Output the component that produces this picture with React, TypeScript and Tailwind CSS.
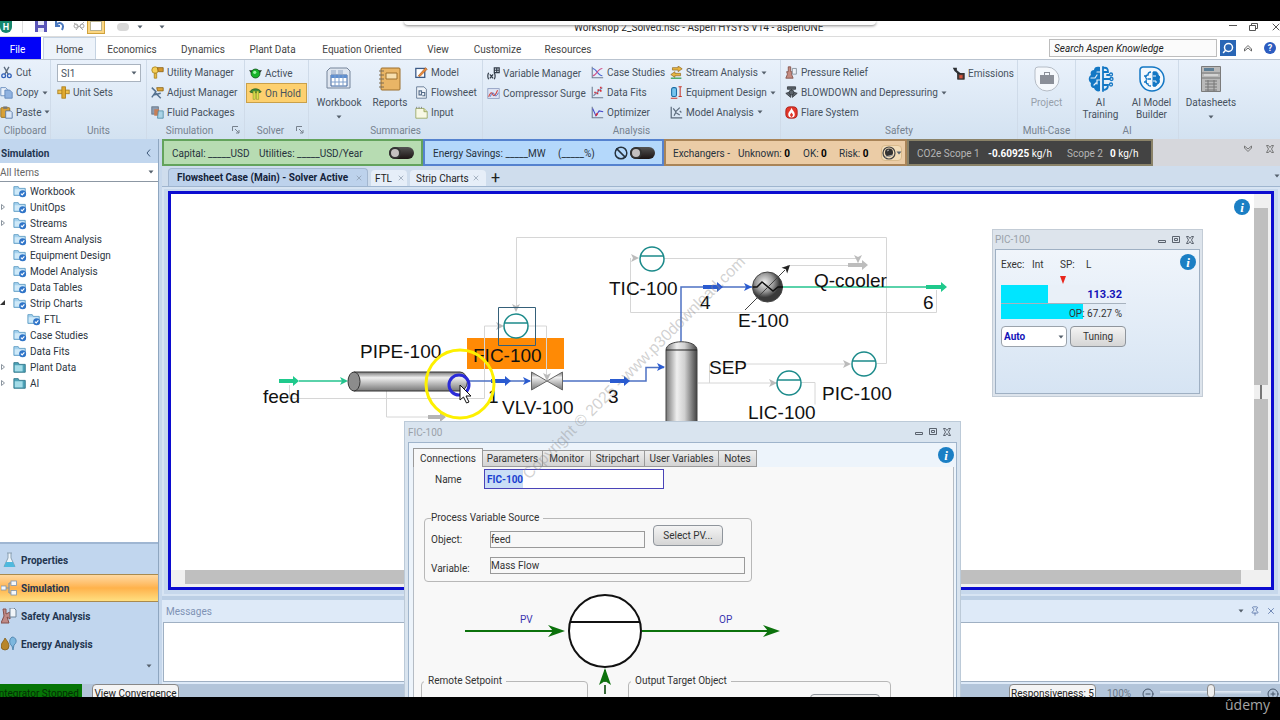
import type { ReactNode } from "react";
import { Search, Pin, X, Ban, CircleMinus, CirclePlus } from "lucide-react";

/* ---------- icons ---------- */

const ICONS: Record<string, ReactNode> = {
  cut: (
    <g fill="none" strokeWidth="1.6">
      <path d="M5 1l5 9M11 1L6 10" stroke="#5c6b7d" />
      <circle cx="4.5" cy="12" r="2.3" stroke="#2f5fb8" />
      <circle cx="11.5" cy="12" r="2.3" stroke="#2f5fb8" />
    </g>
  ),
  copy: (
    <g stroke="#5b82b8">
      <path d="M1 2h6l2 2v8H1z" fill="#e9f1fb" />
      <path d="M6 5h6l3 3v7H6z" fill="#8fb2e0" />
    </g>
  ),
  paste: (
    <g>
      <rect x="1" y="2" width="11" height="12" rx="1" fill="#d9a136" stroke="#8c6a1f" />
      <rect x="4" y="0.5" width="5" height="3" fill="#777" />
      <path d="M7 6h6l2 2v7H7z" fill="#dbe7f7" stroke="#4c6f9f" />
    </g>
  ),
  unitsets: (
    <g stroke="#a87b17">
      <rect x="1" y="5" width="14" height="4.5" fill="#efc14d" />
      <rect x="6" y="1" width="4.5" height="14" fill="#e0a92f" />
    </g>
  ),
  utility: (
    <g>
      <circle cx="5" cy="5" r="4" fill="#f5cf5a" stroke="#a8821c" />
      <path d="M8 2h7v5H9z" fill="#d5972b" stroke="#8b6218" />
      <path d="M4 9h3v6H4z" fill="#e9b944" stroke="#a8821c" />
    </g>
  ),
  adjust: (
    <g>
      <path d="M7 2h8v4H8z" fill="#dca63a" stroke="#8b6218" />
      <path d="M1 2l5 5-5 7M5 8l7 7M3 11l9-2" stroke="#54708e" strokeWidth="1.8" fill="none" />
    </g>
  ),
  fluid: (
    <g>
      <rect x="1" y="1" width="8" height="9" fill="#8c9cb0" stroke="#5f6e80" />
      <rect x="4" y="4" width="6" height="8" fill="#c67e55" />
      <path d="M9 6h6v9H8z" fill="#a9d3e6" stroke="#4f8aa5" />
    </g>
  ),
  active: (
    <g>
      <path d="M0 4h16l-3 4H3z" fill="#2c3a2e" />
      <circle cx="8" cy="8" r="5.5" fill="#17b32a" stroke="#14521c" />
      <circle cx="7" cy="6.5" r="2" fill="#9df5a5" />
    </g>
  ),
  hold: (
    <g>
      <path d="M1 6c3-5 11-5 14 0l-3 1H4z" fill="#3f8e3c" stroke="#245b23" />
      <rect x="5" y="5" width="2.6" height="10" fill="#d8e04a" stroke="#7a8a20" strokeWidth=".6" />
      <rect x="9.5" y="5" width="2.6" height="10" fill="#d8e04a" stroke="#7a8a20" strokeWidth=".6" />
    </g>
  ),
  model: (
    <g>
      <rect x="1" y="3" width="11" height="11" fill="#fff" stroke="#3c5a86" strokeWidth="1.6" />
      <path d="M4 12L13 2l2 2-9 9z" fill="#e98a3a" stroke="#9a4b14" strokeWidth=".7" />
    </g>
  ),
  flowsheet: (
    <g stroke="#566d89" fill="none">
      <path d="M2 1h9l3 3v11H2z" fill="#eef3f9" />
      <path d="M5 6h3v5H5zM8 8h4v4H9" strokeWidth="1.4" />
    </g>
  ),
  input: (
    <g stroke="#94a25a">
      <path d="M1 3h10l4 4v8H1z" fill="#f7f8e4" />
      <path d="M11 3v4h4" fill="#d8dca6" />
      <path d="M2 1v2M5 1v2M8 1v2" stroke="#777" />
    </g>
  ),
  variable: (
    <g fill="none" stroke="#333d49" strokeWidth="1.5">
      <path d="M2 7q-2 4 0 8M9 7q2 4 0 8M3.500 9l4 5M7.500 9l-4 5" />
      <path d="M9 1h6v6H9zM12 1v6M9 4h6" />
    </g>
  ),
  surge: (
    <g fill="none">
      <rect x="1" y="2" width="14" height="12" fill="#dfe5f5" stroke="#8a99bd" />
      <path d="M2 12q3-8 5-3t6-5" stroke="#d2453d" strokeWidth="1.3" />
      <path d="M4 12q3-8 5-3t5-2" stroke="#4967c2" />
    </g>
  ),
  case: (
    <g fill="none" strokeWidth="1.3">
      <path d="M1.500 1v13.500H15" stroke="#6d7c90" />
      <path d="M2 3c5 0 6 9 12 9" stroke="#4b66d0" />
      <path d="M2 12c5 0 6-9 12-9" stroke="#d0568b" />
    </g>
  ),
  fits: (
    <g fill="none" strokeWidth="1.3">
      <path d="M1.500 1v13.500H15" stroke="#6d7c90" />
      <path d="M3 12L14 2" stroke="#7684a8" />
      <path d="M4 8h2M7 9h2M8 5h2M11 6h2M11 2h2" stroke="#d5303a" strokeWidth="2" />
    </g>
  ),
  optimizer: (
    <g fill="none" strokeWidth="1.3">
      <path d="M1.500 1v13.500H15" stroke="#6d7c90" />
      <path d="M2 3l4 9 4-6 5 1" stroke="#4747c8" />
      <path d="M6 12l2-3" stroke="#d5303a" strokeWidth="2" />
    </g>
  ),
  stream: (
    <g stroke="#8b6218" strokeWidth=".8">
      <path d="M3 2h7V0l5 3.500L10 7V5H3z" fill="#e7b541" />
      <path d="M13 9H6V7L1 10.500 6 14v-2h7z" fill="#e7b541" />
      <path d="M1 15h13" stroke="#2e9a4a" strokeWidth="1.500" />
    </g>
  ),
  equipment: (
    <g>
      <rect x="2" y="2" width="6" height="11" rx="2" fill="#77c4ee" stroke="#1b6ea5" strokeWidth="1.3" />
      <path d="M12.500 1v12M10.500 1h4M10.500 13h4M1 15h8" stroke="#c6382c" strokeWidth="1.300" />
    </g>
  ),
  analysis: (
    <g fill="none" stroke="#5b6a7b" strokeWidth="1.500">
      <path d="M1.500 1v13.500H15" />
      <path d="M4 3l3 4 5-5M5 12l2-4 5 3M12 6l2 2" />
    </g>
  ),
  relief: (
    <g>
      <path d="M4 1h3v6h2l-1 3 2 5H1l2-5-1-3h2z" fill="#c58b80" stroke="#7c4b43" />
      <path d="M9 3h5v7H9z" fill="#eef1f5" stroke="#7a8794" />
    </g>
  ),
  blowdown: (
    <g fill="#5d646c" stroke="#33383d">
      <path d="M1 9l6-2v7zM15 9l-6-2v7zM3 1h10v3H3zM8 4v4" />
      <circle cx="8" cy="8" r="3" />
    </g>
  ),
  flare: (
    <g>
      <rect x="1" y="1" width="14" height="14" rx="5" fill="#e2372b" stroke="#a31a12" />
      <path d="M8 2c1 3 4 5 4 8a4 4 0 01-8 0c0-3 3-4 4-8z" fill="#fff" />
      <path d="M8 8l2 3-2 3-2-3z" fill="#e2372b" />
    </g>
  ),
  emissions: (
    <g>
      <path d="M1 1h5v3l5 4-2 2-6-5z" fill="#2e3136" />
      <rect x="7" y="8" width="8" height="7" fill="#4b3a38" stroke="#222" />
      <path d="M9 10h4v4H9z" fill="#d4553f" />
    </g>
  ),
  folder: (
    <g>
      <path d="M1 3h5l1 2h7v8H1z" fill="#a6d3ef" stroke="#5e9cc4" />
      <path d="M2 6h11v6H2z" fill="#cfe9f8" />
      <circle cx="11" cy="11" r="4" fill="#2f74c8" />
      <path d="M9 11l1.500 1.500L13 9.500" stroke="#fff" strokeWidth="1.300" fill="none" />
    </g>
  ),
  plainfolder: (
    <g>
      <path d="M1 3h5l1 2h7v9H1z" fill="#4ea3b8" stroke="#2b7388" />
      <path d="M2 6h9v7H2z" fill="#a4dce8" />
    </g>
  ),
  flask: (
    <g>
      <path d="M6 1h5M7 1v5L3 14.500h11L10 6V1" fill="#eef5fa" stroke="#8aa0b2" />
      <path d="M5 10h7l2 5H3z" fill="#4fb9de" />
    </g>
  ),
  simulation: (
    <g fill="#f5f8fc" stroke="#7d93ad" strokeWidth=".8">
      <path d="M4 8h4M8 3v10M8 3h3M8 13h3" fill="none" strokeWidth="1.200" />
      <rect x="0" y="6" width="5" height="4" />
      <rect x="10" y="1" width="5.500" height="4.500" />
      <rect x="10" y="10.500" width="5.500" height="4.500" />
    </g>
  ),
  safety: (
    <g>
      <path d="M2 1h3v5l4-2v7l-3-2 2 6H0l3-7z" fill="#c08a86" stroke="#84504c" />
      <path d="M9 0h4l2 2v7H9z" fill="#f1f5f9" stroke="#6f8397" />
    </g>
  ),
  energy: (
    <g>
      <path d="M4 2c2 3 4 5 4 8a4 4 0 01-8 0c0-3 3-5 4-8z" fill="#b8862a" stroke="#7a5612" strokeWidth=".7" />
      <path d="M11 1c-4 3-2 8 0 9l1 4 1-5c4-3 2-8-2-8z" fill="#7db7de" stroke="#39719c" strokeWidth=".7" />
    </g>
  ),
};

function Icon({ name, className = "size-[13px]" }: { name: string; className?: string }) {
  return (
    <svg viewBox="0 0 16 16" className={`${className} shrink-0`} aria-hidden="true">
      {ICONS[name]}
    </svg>
  );
}

function Caret({ className = "" }: { className?: string }) {
  return (
    <svg viewBox="0 0 6 4" className={`h-1 w-1.5 shrink-0 ${className}`} aria-hidden="true">
      <path d="M0.500 0.500h5L3 3.500z" fill="#55606c" />
    </svg>
  );
}

function InfoButton() {
  return (
    <button
      aria-label="Info"
      className="flex size-4 items-center justify-center rounded-full bg-[#1b7fc4] font-['Liberation_Serif',serif] text-[13px] leading-none font-bold text-white italic"
    >
      i
    </button>
  );
}

function WindowControls() {
  return (
    <div className="flex items-center gap-1.5 pr-1.5">
      {["Minimize", "Restore", "Close"].map((label) => (
        <button key={label} aria-label={label} className="size-2">
          <svg viewBox="0 0 8 8" fill="none" stroke="#5b636e">
            {label === "Minimize" && <path d="M0.500 4.500h7v2h-7z" />}
            {label === "Restore" && <path d="M0.500 0.500h7v6h-7zM2.500 2.500h3v2h-3z" />}
            {label === "Close" && <path d="M0.500 0.500h2L4 2.500l1.500-2h2L5.500 4l2 3.500h-2L4 5.500l-1.500 2h-2L2.500 4z" />}
          </svg>
        </button>
      ))}
    </div>
  );
}

/* Left half solid with grooves, right half drawn as circuit traces. */
function CircuitBrain() {
  return (
    <svg viewBox="0 0 26 26" className="size-[26px]" fill="none" strokeLinecap="round">
      <path d="M12 1C9 0 6 1 6 4 3 4 2 7 3 9c-3 2-3 6 0 8-1 3 1 5 3 5 1 3 4 4 6 3z" fill="#1377c4" />
      <path d="M12 6H9M3 12h4l2-3M12 14H9v4M6 19l2-2" stroke="#e6eff9" strokeWidth="1.200" />
      <g stroke="#1377c4" strokeWidth="1.800">
        <path d="M15 1v24M15 2c4-1 5 1 5 4h-5M15 13h8M15 19h5c0 4-2 5-5 5M19 9h3" />
      </g>
      <g fill="#e6eff9" stroke="#1377c4" strokeWidth="1.300">
        <circle cx="23" cy="8.500" r="1.500" />
        <circle cx="23.500" cy="13" r="1.500" />
        <circle cx="23" cy="18.500" r="1.500" />
      </g>
    </svg>
  );
}

function ModelBrain() {
  return (
    <svg viewBox="0 0 26 26" className="size-[26px]" fill="none" stroke="#1377c4">
      <path d="M1 4a3 3 0 013-3h9a12 12 0 11-12 12z" fill="#f3f8fd" strokeWidth="1.500" />
      <path d="M12 6c-3 0-3 2-3 3-3 0-3 3-1 4-2 2-1 5 1 5 0 2 1 2 3 2M5 10h3M5 16h3M9 13h3" strokeWidth="1.300" />
      <path d="M14 6c4-1 5 1 5 3 2 1 2 3 1 4 1 3 0 5-2 5 0 2-2 3-4 2z" fill="#1377c4" />
      <path d="M14 10h3M14 15h3v2" stroke="#f3f8fd" />
    </svg>
  );
}

/* ---------- ribbon ---------- */

const MENU = [
  ["Economics", "w-[72px]"],
  ["Dynamics", "w-[70px]"],
  ["Plant Data", "w-[69px]"],
  ["Equation Oriented", "w-[110px]"],
  ["View", "w-[42px]"],
  ["Customize", "w-[77px]"],
  ["Resources", "w-[64px]"],
];

interface RibbonButtonProps {
  icon: string;
  label: string;
  caret?: boolean;
  on?: boolean;
  tight?: boolean;
}

function RibbonButton({ icon, label, caret, on, tight }: RibbonButtonProps) {
  return (
    <button
      className={`flex h-5 items-center gap-[3px] whitespace-nowrap ${
        on ? "w-[61px] border border-[#c9a04a] bg-[#fdd06f] pl-0.5" : tight ? "pl-0" : "pl-[3px]"
      }`}
    >
      <Icon name={icon} />
      {label}
      {caret && <Caret />}
    </button>
  );
}

function BigButton({ label, width, caret, dim, children }: { label: string; width: string; caret?: boolean; dim?: boolean; children: ReactNode }) {
  return (
    <button className={`flex flex-col items-center ${width} ${dim ? "text-[#97a0ab]" : ""}`}>
      <span className="mb-0.5 flex h-8 items-center justify-center">{children}</span>
      <span className="leading-[12px] whitespace-pre-line">{label}</span>
      {caret && <Caret className="mt-1.5" />}
    </button>
  );
}

function Group({ label, width, launcher, children }: { label: string; width: string; launcher?: boolean; children?: ReactNode }) {
  return (
    <div className={`flex shrink-0 flex-col border-r border-[#cfdbe9] pb-px ${width}`}>
      <div className="flex min-h-0 flex-1 pt-[3px]">{children}</div>
      <div className="flex h-4 shrink-0 items-center text-[#76828f]">
        <span className="flex-1 text-center">{label}</span>
        {launcher && (
          <svg viewBox="0 0 8 8" className="mr-1 size-2" fill="none" stroke="#77818d">
            <path d="M0.500 5V0.500H6M3 3l4 4M7 4v3H4" />
          </svg>
        )}
      </div>
    </div>
  );
}

function TitleBar() {
  return (
    <div className="relative flex h-4 shrink-0 items-start overflow-hidden border-b border-[#dcdcdc] bg-white">
      <div className="flex w-[400px] items-start">
        <span className="flex size-3 items-center justify-center rounded-b-full bg-[#16876c] text-[9px] leading-none font-bold text-white">H</span>
        <span className="ml-2.5 h-3 border-l border-[#ddd]" />
        <button aria-label="Save" className="ml-3">
          <svg viewBox="0 0 12 11" className="h-[11px] w-3">
            <path d="M0 0h12v11H0z" fill="#5a55b8" />
            <path d="M3 0h6v4H3zM3 7h6v4H3z" fill="#e9e9f7" />
          </svg>
        </button>
        <button aria-label="Undo" className="ml-2">
          <svg viewBox="0 0 10 10" className="size-2.5" fill="none" stroke="#4a78bf" strokeWidth="2">
            <path d="M1 4c4-4 9-1 6 5M1 0v5h4" />
          </svg>
        </button>
        <button aria-label="Explore" className="ml-2">
          <svg viewBox="0 0 12 10" className="h-2.5 w-3" fill="none" stroke="#a9a9a9">
            <path d="M1 2l5 4 5-5M3 9l3-4 4 4" />
            <circle cx="3" cy="5" r="2" />
            <circle cx="9" cy="5" r="2" />
          </svg>
        </button>
        <button aria-label="New" className="ml-0.5 flex h-[13px] w-[18px] items-end justify-center border border-t-0 border-[#d0a23c] bg-[#fbd682] pb-0.5">
          <span className="h-2.5 w-3 border border-[#b9b28e] bg-white" />
        </button>
        <button aria-label="Open" className="mt-0.5 ml-3 h-2 w-3 rounded-sm bg-[#d8d8d8]" />
        <Caret className="mt-1 ml-2" />
        <Caret className="mt-1 ml-4" />
      </div>
      <h1 className="ml-[174px] flex-1 leading-[13px] whitespace-nowrap text-[#222]">
        Workshop 2_Solved.hsc - Aspen HYSYS V14 - aspenONE
      </h1>
      <div className="flex items-start gap-3 text-[#555]">
        <button aria-label="Minimize" className="mt-1 h-px w-2 bg-[#555]" />
        <button aria-label="Restore" className="mt-0.5">
          <svg viewBox="0 0 9 8" className="h-2 w-[9px]" fill="none" stroke="#555">
            <path d="M0.500 2.500h6v5h-6zM2.500 2V.5h6v5H7" />
          </svg>
        </button>
        <button aria-label="Close" className="-mr-0.5">
          <X className="size-3" />
        </button>
      </div>
      <div className="absolute top-0 left-1/2 h-[4px] w-[472px] -translate-x-1/2 rounded-b-md bg-[#fdfdfd] shadow-[0_1px_3px_#888]" />
    </div>
  );
}

function MenuBar() {
  return (
    <nav className="flex h-[23px] shrink-0 items-stretch border-b border-[#b9c3cf] bg-white text-[#444]">
      <button className="w-[41px] bg-[#0202f8] pt-0.5 pr-1.5 text-white">File</button>
      <button className="ml-0.5 w-[53px] border-x border-t border-[#c5d3e2] bg-[#edf3fa] pt-0.5">Home</button>
      {MENU.map(([label, width]) => (
        <button key={label} className={`pt-0.5 whitespace-nowrap ${width}`}>
          {label}
        </button>
      ))}
      <div className="flex flex-1 items-center justify-end">
        <input
          aria-label="Search Aspen Knowledge"
          placeholder="Search Aspen Knowledge"
          className="h-[18px] w-[168px] border border-[#bdbdbd] bg-[#fbfbfb] px-1 italic placeholder:text-[#222]"
        />
        <button aria-label="Search" className="ml-[3px] flex size-4 items-center justify-center bg-[#2a66b5] text-white">
          <Search className="size-3 -scale-x-100" strokeWidth={3} />
        </button>
        <button aria-label="Collapse ribbon" className="ml-2 text-[#666]">
          <svg viewBox="0 0 8 7" className="h-[7px] w-2" fill="none" stroke="currentColor">
            <path d="M0.500 4L4 0.500 7.500 4v2L4 3 0.500 6z" />
          </svg>
        </button>
        <button aria-label="Help" className="mr-1 ml-3 size-3 rounded-full bg-[#2c5cc0] text-[9px] leading-none font-bold text-white">
          ?
        </button>
      </div>
    </nav>
  );
}

function Ribbon() {
  return (
    <div className="flex h-[79px] shrink-0 overflow-hidden bg-linear-to-b from-[#e9f1fb] to-[#d3e2f1] text-[#47525e]">
      <Group label="Clipboard" width="w-[51px]">
        <div className="flex flex-col">
          <RibbonButton icon="cut" label="Cut" tight />
          <RibbonButton icon="copy" label="Copy" caret tight />
          <RibbonButton icon="paste" label="Paste" caret tight />
        </div>
      </Group>
      <Group label="Units" width="w-24">
        <div className="flex flex-col pl-1.5">
          <label className="relative mt-px flex h-[18px] items-center">
            <select aria-label="Unit set" className="h-full w-[84px] appearance-none border border-[#a9b3bf] bg-white pl-[3px]">
              <option>SI1</option>
            </select>
            <Caret className="absolute right-1" />
          </label>
          <RibbonButton icon="unitsets" label="Unit Sets" tight />
        </div>
      </Group>
      <Group label="Simulation" width="w-[98px]" launcher>
        <div className="flex flex-col pl-px">
          <RibbonButton icon="utility" label="Utility Manager" />
          <RibbonButton icon="adjust" label="Adjust Manager" />
          <RibbonButton icon="fluid" label="Fluid Packages" />
        </div>
      </Group>
      <Group label="Solver" width="w-[64px]" launcher>
        <div className="flex flex-col pl-px">
          <RibbonButton icon="active" label="Active" />
          <RibbonButton icon="hold" label="On Hold" on />
        </div>
      </Group>
      <Group label="Summaries" width="w-[174px]">
        <BigButton label="Workbook" width="w-[60px]" caret>
          <svg viewBox="0 0 26 24" className="h-6 w-[26px]">
            <path d="M1 4l3-3h17l3 3v17H1z" fill="#dfe6f0" stroke="#75849a" />
            <path d="M5 3h5v4H5zM12 3h5v4h-5z" fill="#b8c6da" />
            <path d="M5 8h16v11H5z" fill="#fff" stroke="#41669f" />
            <path d="M5 8h16v3H5z" fill="#5f8fd0" />
            <path d="M9 8v11M13 8v11M17 8v11M5 15h16" stroke="#7f9fcc" />
          </svg>
        </BigButton>
        <BigButton label="Reports" width="w-[42px]">
          <svg viewBox="0 0 22 24" className="h-6 w-[22px]">
            <rect x="2" y="1" width="19" height="22" rx="1" fill="#e9b566" stroke="#9c6f2c" />
            <path d="M7 6h11v6H7z" fill="#f7dfae" stroke="#9c6f2c" />
            <path d="M0 4h5M0 8h5M0 12h5M0 16h5M0 20h5" stroke="#7b6b53" />
          </svg>
        </BigButton>
        <div className="flex flex-col pl-1">
          <RibbonButton icon="model" label="Model" tight />
          <RibbonButton icon="flowsheet" label="Flowsheet" tight />
          <RibbonButton icon="input" label="Input" tight />
        </div>
      </Group>
      <Group label="Analysis" width="w-[298px]">
        <div className="flex w-[104px] flex-col pl-px">
          <RibbonButton icon="variable" label="Variable Manager" />
          <RibbonButton icon="surge" label="Compressor Surge" />
        </div>
        <div className="flex w-20 flex-col pl-px">
          <RibbonButton icon="case" label="Case Studies" />
          <RibbonButton icon="fits" label="Data Fits" />
          <RibbonButton icon="optimizer" label="Optimizer" />
        </div>
        <div className="flex flex-col">
          <RibbonButton icon="stream" label="Stream Analysis" caret />
          <RibbonButton icon="equipment" label="Equipment Design" caret />
          <RibbonButton icon="analysis" label="Model Analysis" caret />
        </div>
      </Group>
      <Group label="Safety" width="w-[237px]">
        <div className="flex w-[168px] flex-col pl-px">
          <RibbonButton icon="relief" label="Pressure Relief" />
          <RibbonButton icon="blowdown" label="BLOWDOWN and Depressuring" caret />
          <RibbonButton icon="flare" label="Flare System" />
        </div>
        <RibbonButton icon="emissions" label="Emissions" />
      </Group>
      <Group label="Multi-Case" width="w-[58px]">
        <BigButton label="Project" width="w-[60px]" dim>
          <svg viewBox="0 0 26 26" className="size-[26px]">
            <path d="M1 4a3 3 0 013-3h9a12 12 0 11-12 12z" fill="#f5f8fc" stroke="#b5bcc6" />
            <path d="M6 9h14v9H6zM10 9V6h6v3h-1V7h-4v2z" fill="#8b8f98" />
          </svg>
        </BigButton>
      </Group>
      <Group label="AI" width="w-[103px]">
        <BigButton label={"AI\nTraining"} width="w-[49px]">
          <CircuitBrain />
        </BigButton>
        <BigButton label={"AI Model\nBuilder"} width="w-[53px]">
          <ModelBrain />
        </BigButton>
      </Group>
      <div className="flex flex-1 pt-[3px]">
        <BigButton label="Datasheets" width="w-[64px]" caret>
          <svg viewBox="0 0 20 26" className="h-[26px] w-5">
            <path d="M0.500 0.500h19v25H.5z" fill="#b9b9b9" stroke="#7b7b7b" />
            <path d="M3 2h10v3H3z" fill="#5f7f96" />
            <path d="M1 7h18M1 12h18M4 15h12M4 18h12M4 21h12M4 24h12M7 14v11M13 14v11" stroke="#767676" />
            <path d="M3 9h14" stroke="#eee" />
          </svg>
        </BigButton>
      </div>
    </div>
  );
}

/* ---------- sidebar ---------- */

const TREE: { label: string; arrow?: "closed" | "open"; plain?: boolean; child?: boolean }[] = [
  { label: "Workbook" },
  { label: "UnitOps", arrow: "closed" },
  { label: "Streams", arrow: "closed" },
  { label: "Stream Analysis" },
  { label: "Equipment Design" },
  { label: "Model Analysis" },
  { label: "Data Tables" },
  { label: "Strip Charts", arrow: "open" },
  { label: "FTL", child: true },
  { label: "Case Studies" },
  { label: "Data Fits" },
  { label: "Plant Data", arrow: "closed", plain: true },
  { label: "AI", arrow: "closed", plain: true },
];

const SECTIONS = [
  { label: "Properties", icon: "flask" },
  { label: "Simulation", icon: "simulation", on: true },
  { label: "Safety Analysis", icon: "safety" },
  { label: "Energy Analysis", icon: "energy" },
];

function Sidebar() {
  return (
    <aside className="flex w-[159px] shrink-0 flex-col border-r border-[#8ea6c0] bg-[#c1d6ee]">
      <div className="flex h-6 items-center justify-between px-px pt-1 text-[10px] font-bold text-[#1f3550]">
        Simulation
        <button aria-label="Collapse" className="pr-1.5">
          <svg viewBox="0 0 5 8" className="h-2 w-[5px]" fill="none" stroke="#3c5878">
            <path d="M4 0.500L1 4l3 3.500" />
          </svg>
        </button>
      </div>
      <label className="relative flex h-[19px] items-center border-b border-[#8c97a3] bg-white">
        <select aria-label="Filter items" className="h-full w-full appearance-none text-[#666]">
          <option>All Items</option>
        </select>
        <Caret className="absolute right-1" />
      </label>
      <ul className="min-h-0 flex-1 overflow-hidden bg-white pt-px text-[#2b3440]">
        {TREE.map((t) => (
          <li key={t.label} className={`flex h-4 items-center gap-[3px] ${t.child ? "pl-3.5" : ""}`}>
            <svg viewBox="0 0 6 8" className="mr-1 h-2 w-1.5" fill="none" stroke="#8b959f">
              {t.arrow === "closed" && <path d="M1.500 1.500L4.500 4l-3 2.500z" />}
              {t.arrow === "open" && <path d="M5 1v5H0z" fill="#333" stroke="none" />}
            </svg>
            <Icon name={t.plain ? "plainfolder" : "folder"} className="size-3.5" />
            {t.label}
          </li>
        ))}
      </ul>
      <div className="h-[142px] shrink-0 border-t-2 border-[#9fb6d2] pt-0.5">
        {SECTIONS.map((s) => (
          <button
            key={s.label}
            className={`flex h-7 w-full items-center gap-1 pl-px font-bold text-[#1f3550] ${
              s.on ? "border-y border-[#a98a4e] bg-linear-to-b from-[#ffd9a0] via-[#ffb24a] to-[#ffdf80]" : ""
            }`}
          >
            <Icon name={s.icon} className="size-4" />
            {s.label}
          </button>
        ))}
        <div className="flex justify-end pt-1.5 pr-1.5">
          <Caret />
        </div>
      </div>
    </aside>
  );
}

/* ---------- KPI strip and tabs ---------- */

function Toggle({ label }: { label: string }) {
  return (
    <input
      type="checkbox"
      role="switch"
      aria-label={label}
      className="h-3 w-[25px] appearance-none rounded-full bg-linear-to-b from-[#555] to-[#1c1515] before:block before:size-3 before:rounded-full before:border-2 before:border-[#333] before:bg-[#c4c0c0]"
    />
  );
}

function KpiBar() {
  return (
    <div className="flex h-[27px] shrink-0 whitespace-nowrap bg-[#d6d7dc] text-[#26313c]">
      <div className="flex w-[261px] items-center border-2 border-[#63a35c] bg-[#b7dcb2] pt-px pl-2">
        <span className="w-[87px]">Capital: _____USD</span>
        <span className="flex-1">Utilities: _____USD/Year</span>
        <span className="flex pr-[7px]">
          <Toggle label="Economics active" />
        </span>
      </div>
      <div className="flex w-[241px] items-center border-2 border-[#5582cf] bg-[#b4d8fb] pt-px pl-2">
        <span className="w-[125px]">Energy Savings: _____MW</span>
        <span className="flex-1">(_____%)</span>
        <Ban className="mr-0.5 size-3.5" strokeWidth={2.5} />
        <span className="flex pr-[7px]">
          <Toggle label="Energy active" />
        </span>
      </div>
      <div className="flex w-[243px] items-center border-2 border-[#a98458] bg-[#ebcca6] pt-px pl-[7px]">
        <span className="w-[65px]">Exchangers -</span>
        <span className="w-[65px]">Unknown: <b className="text-black">0</b></span>
        <span className="w-[36px]">OK: <b className="text-black">0</b></span>
        <span className="flex-1">Risk: <b className="text-black">0</b></span>
        <button aria-label="Exchanger options" className="mr-[3px] flex h-4 w-[21px] items-center rounded-sm border border-[#d9ba8c] bg-[#f2dcb8]">
          <svg viewBox="0 0 14 14" className="size-3.5 shrink-0" fill="none">
            <circle cx="7" cy="7" r="6" stroke="#444" strokeWidth="1.200" />
            <circle cx="7" cy="6.500" r="4" fill="#333" />
            <path d="M3 11l8-2M5 5l2-1" stroke="#aaa" />
          </svg>
          <Caret />
        </button>
      </div>
      <div className="flex w-[246px] items-center border-2 border-[#8a8268] bg-[#434343] pt-px pl-2 text-[#b5b5b5]">
        <span className="w-[71px]">CO2e Scope 1</span>
        <span className="w-[79px] text-white"><b>-0.60925</b> kg/h</span>
        <span className="w-[43px]">Scope 2</span>
        <span className="text-white"><b>0</b> kg/h</span>
      </div>
      <div className="flex flex-1 items-start justify-end gap-3.5 pt-1.5 pr-1.5">
        <svg viewBox="0 0 8 7" className="h-[7px] w-2" fill="none" stroke="#777">
          <path d="M0.500 3L4 6.500 7.500 3V1L4 4 .5 1z" />
        </svg>
        <svg viewBox="0 0 8 8" className="size-2" fill="none" stroke="#777">
          <path d="M0.500 0.500h2L4 2.500l1.500-2h2L5.500 4l2 3.500h-2L4 5.500l-1.500 2h-2L2.500 4z" />
        </svg>
      </div>
    </div>
  );
}

function TabStrip() {
  return (
    <div className="flex h-[21px] shrink-0 items-end gap-[3px] border-b border-[#9fb5cf] bg-[#cfdded] pl-1.5 whitespace-nowrap text-[#222]">
      <button className="flex h-[18px] w-[200px] items-center justify-between rounded-t border border-b-0 border-[#a3b7d0] bg-[#bdd2ec] pr-1 pl-2 font-bold text-[#14233a]">
        Flowsheet Case (Main) - Solver Active
        <X className="size-2 text-[#8796a8]" />
      </button>
      <button className="flex h-4 w-[36px] items-center justify-between rounded-t bg-[#e6eef8] pr-0.5 pl-1">
        FTL
        <X className="size-2 text-[#8796a8]" />
      </button>
      <button className="flex h-4 w-[76px] items-center justify-between rounded-t bg-[#e6eef8] pr-1.5 pl-1.5">
        Strip Charts
        <X className="size-2 text-[#8796a8]" />
      </button>
      <button aria-label="New tab" className="h-4 pl-0.5 text-[16px] leading-4">+</button>
      <span className="flex h-full flex-1 items-center justify-end">
        <Caret />
      </span>
    </div>
  );
}

/* ---------- flowsheet ---------- */

const LABELS: [string, number, number][] = [
  ["feed", 263, 403],
  ["PIPE-100", 360, 358],
  ["FIC-100", 473, 362],
  ["1", 488, 403],
  ["VLV-100", 502, 414],
  ["3", 608, 403],
  ["TIC-100", 609, 295],
  ["4", 700, 309],
  ["E-100", 738, 327],
  ["Q-cooler", 814, 287],
  ["6", 923, 309],
  ["SEP", 709, 374],
  ["LIC-100", 748, 419],
  ["PIC-100", 822, 400],
];

function Controller({ x, y }: { x: number; y: number }) {
  return (
    <g fill="#fff" stroke="#1b8a8a" strokeWidth="1.500">
      <circle cx={x} cy={y} r="12" />
      <path d={`M${x - 11.500} ${y - 3}h23`} />
    </g>
  );
}

function StreamArrow({ x, y, color, w = 20 }: { x: number; y: number; color: string; w?: number }) {
  return <path d={`M${x} ${y - 2}h${w - 6}v-3l6 5-6 5v-3h-${w - 6}z`} fill={color} />;
}

function Tip({ x, y, color, r = 0 }: { x: number; y: number; color: string; r?: number }) {
  return <path d="M0 0l-8-4 2 4-2 4z" fill={color} transform={`translate(${x} ${y}) rotate(${r})`} />;
}

function Flowsheet() {
  return (
    <svg className="absolute inset-0 h-full w-full" role="img" aria-label="Process flowsheet">
      <defs>
        <linearGradient id="pipe" x2="0" y2="1">
          <stop offset="0" stopColor="#777" />
          <stop offset="0.3" stopColor="#f0f0f0" />
          <stop offset="1" stopColor="#777" />
        </linearGradient>
        <linearGradient id="vessel">
          <stop offset="0" stopColor="#777" />
          <stop offset="0.350" stopColor="#efefef" />
          <stop offset="0.600" stopColor="#d0d0d0" />
          <stop offset="1" stopColor="#444" />
        </linearGradient>
        <radialGradient id="ball" cx="0.400" cy="0.350">
          <stop offset="0" stopColor="#f0f0f0" />
          <stop offset="0.600" stopColor="#999" />
          <stop offset="1" stopColor="#3a3a3a" />
        </radialGradient>
      </defs>
      <g transform="translate(-171 -194)">
        <path d="M467 338h97v31h-97z" fill="#ff8a05" />
        <g fill="none" stroke="#d6d6d6">
          <path d="M516.500 308V237.500h370v126h-10M289.500 385v13.500h195v-72.500h18M528 326h18.500v50" />
          <path d="M386.500 391v26h45M630.500 258v54.500h306V290M664 258.500h194v4M698 383h84M709.500 383v-19h138M801 382.500h14v22M787 265.500h65" />
        </g>
        <g fill="none" stroke="#4d72c4" strokeWidth="1.500">
          <path d="M468 381h62M563 381h83v-13.500h18M681 342V287h71" />
        </g>
        <path d="M299 381h46M783 287h145" stroke="#24c48e" strokeWidth="1.500" />
        <StreamArrow x={279} y={381} color="#1fc98c" />
        <StreamArrow x={926} y={287} color="#1fc98c" w={21} />
        <StreamArrow x={491} y={381} color="#2a5bd0" />
        <StreamArrow x={610} y={381} color="#2a5bd0" />
        <StreamArrow x={703} y={287} color="#2a5bd0" />
        <StreamArrow x={848} y={265} color="#bdbdbd" />
        <StreamArrow x={428} y={417} color="#b5b5b5" w={18} />
        <Tip x={348} y={381} color="#24c48e" />
        <Tip x={531} y={381} color="#2a5bd0" />
        <Tip x={665} y={367} color="#2a5bd0" />
        <Tip x={752} y={287} color="#2a5bd0" />
        <Tip x={516} y={312} color="#bbb" r={90} />
        <Tip x={504} y={326} color="#bbb" />
        <Tip x={639} y={258} color="#bbb" />
        <Tip x={858} y={263} color="#bbb" r={90} />
        <Tip x={777} y={383} color="#bbb" />
        <Tip x={851} y={364} color="#bbb" />
        <path d="M354 372h106a7 9 0 010 19H354z" fill="url(#pipe)" stroke="#333" />
        <ellipse cx="354" cy="381.500" rx="6" ry="9.500" fill="#8c8c8c" stroke="#333" />
        <path d="M531.500 372l31 18v-18l-31 18z" fill="url(#pipe)" stroke="#666" />
        <Tip x={547} y={381} color="#bbb" r={90} />
        <path d="M498.500 307.500h37v38h-37z" fill="none" stroke="#356079" />
        <Controller x={516} y={326} />
        <Controller x={652} y={259} />
        <Controller x={864} y={364} />
        <Controller x={789} y={383} />
        <path d="M666 350v80h31v-80c0-11-31-11-31 0z" fill="url(#vessel)" stroke="#444" />
        <path d="M666 350h31" stroke="#222" />
        <circle cx="767.500" cy="287" r="15" fill="url(#ball)" stroke="#444" />
        <path d="M753 287h4l5-5 11 9 5-4h5" fill="none" stroke="#111" strokeWidth="1.500" />
        <path d="M745 310l40-40" stroke="#444" />
        <Tip x={790} y={265} color="#222" r={-45} />
        <g fontFamily="'Liberation Sans', sans-serif" fontSize="19" fill="#111">
          {LABELS.map(([text, x, y]) => (
            <text key={text} x={x} y={y}>
              {text}
            </text>
          ))}
        </g>
      </g>
    </svg>
  );
}

function PicWindow() {
  return (
    <section className="absolute top-[35px] left-[821px] flex h-[168px] w-[211px] flex-col border border-[#c3ccd6] bg-[#dde4ec] px-0.5 pb-0.5">
      <header className="flex h-[19px] items-center justify-between text-[#9aa1a9]">
        PIC-100
        <WindowControls />
      </header>
      <div className="flex flex-1 justify-between border border-[#9fb0c3] bg-linear-to-b from-[#f0f5fb] to-[#d6e4f3] pt-1 pr-[3px] pl-[5px] text-[#333]">
        <div className="w-[125px]">
          <div className="flex h-5 items-center">
            <span className="w-[31px]">Exec:</span>
            <span className="w-7">Int</span>
            <span className="w-[26px]">SP:</span>
            <span>L</span>
          </div>
          <svg viewBox="0 0 125 8" className="mt-0.5 h-2 w-full" aria-hidden="true">
            <path d="M59 0h6l-3 8z" fill="#e8261c" />
          </svg>
          <div className="mt-px h-[19px] border-b border-[#a7b2be] bg-linear-to-r from-[#00e5ff] from-[38%] to-[#e9f0f8] to-[38%] pr-1 text-right text-[11px] leading-[19px] font-bold text-[#1313b8]">
            113.32
          </div>
          <div className="h-[15px] bg-linear-to-r from-[#00e5ff] from-[66%] to-[#e3ecf6] to-[66%] pr-1 text-right leading-[19px]">
            OP: 67.27 %
          </div>
          <div className="mt-[7px] flex h-[21px] gap-[3px]">
            <label className="relative flex w-[66px] items-center">
              <select aria-label="Mode" className="h-full w-full appearance-none rounded-sm border border-[#9ba3ac] bg-white pl-0.5 font-bold text-[#1313b8]">
                <option>Auto</option>
              </select>
              <Caret className="absolute right-[3px]" />
            </label>
            <button className="flex-1 rounded-sm border border-[#8f959c] bg-linear-to-b from-[#f4f4f4] to-[#d5d5d5] text-[10px]">
              Tuning
            </button>
          </div>
        </div>
        <InfoButton />
      </div>
    </section>
  );
}

function Canvas() {
  return (
    <div className="flex min-h-0 flex-1 border-2 border-[#d7e4f3] px-1 pt-[2px] pb-1">
      <div className="relative flex min-h-0 flex-1 flex-col overflow-hidden border-[3px] border-[#0c0cd0] bg-white">
        <div className="flex min-h-0 flex-1">
          <div className="relative min-h-0 flex-1">
            <Flowsheet />
            <PicWindow />
            <div className="absolute top-[5px] right-1">
              <InfoButton />
            </div>
          </div>
          <div className="flex w-[17px] flex-col bg-[#f0f0f0] pt-3.5 pr-[3px]">
            <div className="h-[177px] bg-[#bfbfbf]" />
            <div className="flex h-3.5 justify-center">
              <span className="w-0.5 bg-[#777]" />
            </div>
            <div className="flex-1 bg-[#bfbfbf]" />
          </div>
        </div>
        <div className="flex h-[17px] shrink-0 bg-[#f0f0f0] pr-[30px] pb-[3px] pl-3.5">
          <div className="flex-1 bg-[#bfbfbf]" />
        </div>
      </div>
    </div>
  );
}

function Messages() {
  return (
    <section className="flex h-[88px] shrink-0 flex-col border-t-4 border-[#bccfe5] bg-[#deeaf8] pb-0.5">
      <header className="flex h-[22px] items-center justify-between px-1 text-[#7f93b5]">
        Messages
        <span className="flex items-center gap-1.5 text-[#5a75a8]">
          <Caret />
          <Pin className="size-2.5" />
          <X className="size-2.5" />
        </span>
      </header>
      <div className="mx-px flex-1 border border-[#9fb0c3] bg-white" />
    </section>
  );
}

function StatusBar() {
  return (
    <footer className="flex h-[13px] shrink-0 items-start overflow-hidden bg-[#b3c5da] text-[#222]">
      <span className="-ml-1 h-5 w-[86px] bg-[#067506] pt-0.5 leading-[16px] whitespace-nowrap text-[#042c04]">
        Integrator Stopped
      </span>
      <button className="ml-2.5 h-5 w-[87px] rounded-sm border border-[#888] bg-[#f4f4f4] leading-[16px] whitespace-nowrap">
        View Convergence
      </button>
      <div className="flex flex-1 items-start justify-end">
        <button className="h-5 w-[87px] rounded-sm border border-[#888] bg-[#f4f4f4] leading-[16px] whitespace-nowrap">
          Responsiveness: 5
        </button>
        <span className="w-[46px] pt-0.5 text-center leading-[16px] text-[#6a7787]">100%</span>
        <CircleMinus className="mt-1 size-3 text-[#46566a]" />
        <input
          type="range"
          aria-label="Zoom"
          className="mx-1.5 h-3.5 w-[101px] appearance-none bg-linear-to-b from-transparent from-[50%] via-[#e5edf6] via-[50%] to-transparent to-[75%] [&::-webkit-slider-thumb]:h-3.5 [&::-webkit-slider-thumb]:w-2 [&::-webkit-slider-thumb]:appearance-none [&::-webkit-slider-thumb]:rounded-sm [&::-webkit-slider-thumb]:border [&::-webkit-slider-thumb]:border-[#888] [&::-webkit-slider-thumb]:bg-[#eee]"
        />
        <CirclePlus className="mt-1 mr-px size-3 text-[#46566a]" />
      </div>
    </footer>
  );
}

/* ---------- FIC-100 window ---------- */

function FicTab({ label, width }: { label: string; width: string }) {
  return (
    <button className={`h-[17px] border border-l-0 border-[#9a9a9a] bg-linear-to-b from-[#ededed] to-[#d3d3d3] whitespace-nowrap ${width}`}>
      {label}
    </button>
  );
}

function FicWindow() {
  return (
    <section className="absolute top-[400px] left-[404px] flex h-[340px] w-[557px] flex-col border border-[#bccad8] bg-[#d9e4ef] px-[3px] text-[#333]">
      <header className="flex h-[20px] items-center justify-between text-[#9aa1a9]">
        FIC-100
        <WindowControls />
      </header>
      <div className="flex flex-1 flex-col border border-[#9fb4cb] bg-[#edf4fb] pt-1 pr-0.5 pl-1">
        <div className="flex items-end">
          <button className="h-[19px] w-[70px] border border-b-0 border-[#9a9a9a] bg-[#f8f8f8]">Connections</button>
          <FicTab label="Parameters" width="w-[60px]" />
          <FicTab label="Monitor" width="w-[48px]" />
          <FicTab label="Stripchart" width="w-[54px]" />
          <FicTab label="User Variables" width="w-[74px]" />
          <FicTab label="Notes" width="w-[38px]" />
          <div className="flex flex-1 justify-end pb-1">
            <InfoButton />
          </div>
        </div>
        <div className="flex-1 border-x border-[#b5bcc4] bg-[#f8f8f8] pt-0.5">
          <div className="flex h-5 items-center">
            <label htmlFor="fic-name" className="w-[70px] pl-[21px]">Name</label>
            <input
              id="fic-name"
              defaultValue="FIC-100"
              className="h-5 w-[180px] border border-[#4a44b8] bg-linear-to-r from-[#c9def6] from-[38px] to-white to-[38px] px-0.5 font-bold text-[#1a3fd0]"
            />
          </div>
          <fieldset className="mt-[22px] ml-2.5 h-[71px] w-[327px] rounded border border-[#b8b8b8] px-1.5">
            <legend className="h-3.5 pr-1 leading-[14px]">Process Variable Source</legend>
            <div className="flex items-start">
              <label htmlFor="pv-object" className="mt-2 w-[59px] leading-[14px]">Object:</label>
              <input id="pv-object" defaultValue="feed" readOnly className="mt-1.5 h-[17px] w-[155px] border border-[#9a9a9a]" />
              <button className="ml-2 h-[21px] w-[70px] rounded-sm border border-[#8f959c] bg-linear-to-b from-[#f4f4f4] to-[#d5d5d5]">
                Select PV...
              </button>
            </div>
            <div className="mt-2 flex items-start">
              <label htmlFor="pv-variable" className="mt-1.5 w-[59px] leading-[14px]">Variable:</label>
              <input id="pv-variable" defaultValue="Mass Flow" readOnly className="mt-px h-[17px] w-[255px] border border-[#9a9a9a]" />
            </div>
          </fieldset>
          <svg viewBox="0 0 480 92" className="h-[92px] w-[480px] overflow-visible" role="img" aria-label="PV to OP loop">
            <g stroke="#0c720c" strokeWidth="2">
              <path d="M51 49h95M228 49h130" />
              <path d="M191 88v24" strokeDasharray="12 3" stroke="#3a6b3a" />
            </g>
            <path d="M151 49l-17-6 5 6-5 6zM366 49l-17-6 5 6-5 6zM191 86l-6 17 6-4 6 4z" fill="#0c720c" />
            <circle cx="191" cy="49" r="36" fill="#fff" stroke="#111" strokeWidth="2" />
            <path d="M157 40h68" stroke="#111" strokeWidth="2" />
            <g fill="#3b35b0">
              <text x="106" y="41">PV</text>
              <text x="305" y="41">OP</text>
            </g>
          </svg>
          <div className="flex gap-10 pl-[7px]">
            <fieldset className="h-20 w-[167px] rounded border border-[#b8b8b8] px-0.5">
              <legend className="h-3.5 px-1 leading-[14px]">Remote Setpoint</legend>
            </fieldset>
            <fieldset className="h-20 w-[263px] rounded border border-[#b8b8b8] pr-2.5 pl-0.5">
              <legend className="h-3.5 px-1 leading-[14px]">Output Target Object</legend>
              <div className="flex justify-end pt-1.5">
                <button aria-label="Select OP" className="h-[21px] w-[70px] rounded-sm border border-[#8f959c] bg-[#efefef]" />
              </div>
            </fieldset>
          </div>
        </div>
      </div>
    </section>
  );
}

/* Watermark and click highlight sit above every window. */
function Overlay() {
  return (
    <svg className="pointer-events-none absolute inset-0 h-full w-full" aria-hidden="true">
      <text transform="translate(529 480) rotate(-45)" fontFamily="'Liberation Sans', sans-serif" fontSize="16" fill="#8a8a8a" fillOpacity="0.4">
        Copyright © 2025 - www.p30download.com
      </text>
      <circle cx="460" cy="384" r="34" fill="none" stroke="#fdf000" strokeWidth="3" />
      <circle cx="459" cy="385" r="10" fill="none" stroke="#2b2bd8" strokeWidth="3" />
      <path d="M460 385v15l3.500-3 3 6 2.500-1-3-6h5z" fill="#fff" stroke="#111" />
    </svg>
  );
}

export default function App() {
  return (
    <div className="relative flex h-screen flex-col overflow-hidden bg-black pt-[21px] font-[Roboto,sans-serif] text-[10px]">
      <div className="relative flex min-h-0 flex-1 flex-col overflow-hidden bg-[#c7d8ec]">
        <TitleBar />
        <MenuBar />
        <Ribbon />
        <div className="flex min-h-0 flex-1">
          <Sidebar />
          <main className="flex min-w-0 flex-1 flex-col pl-[3px]">
            <KpiBar />
            <TabStrip />
            <Canvas />
            <Messages />
          </main>
        </div>
        <StatusBar />
        <FicWindow />
      </div>
      <div className="flex h-[23px] shrink-0 items-start justify-end pr-2.5 font-['Open_Sans',sans-serif] text-[14px] leading-4 text-[#a5a5a5]">
        ûdemy
      </div>
      <Overlay />
    </div>
  );
}
